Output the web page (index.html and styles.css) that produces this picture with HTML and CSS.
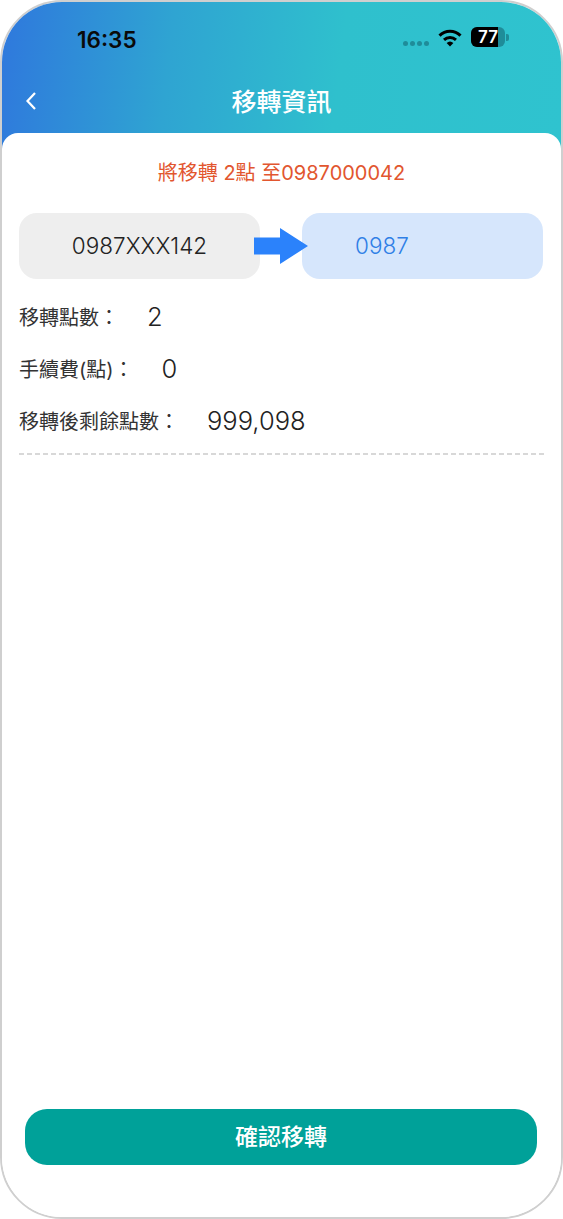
FILE: index.html
```html
<!DOCTYPE html>
<html lang="zh-Hant">
<head>
    <meta charset="UTF-8">
    <meta name="viewport" content="width=device-width, initial-scale=1.0">
    <title>移轉資訊</title>
    <link rel="stylesheet" href="styles.css">
</head>
<body>

    <div class="phone">
        <div class="header">
            <div class="statusBar">
                <span class="clock">16:35</span>
                <div class="statusIcons">
                    <span class="signalDots"><i></i><i></i><i></i><i></i></span>
                    <svg class="wifi" width="24" height="18" viewBox="0 0 24 18">
                        <path d="M1.5 6.6 A15 15 0 0 1 22.5 6.6" fill="none" stroke="#000" stroke-width="3"/>
                        <path d="M6 10.8 A9 9 0 0 1 18 10.8" fill="none" stroke="#000" stroke-width="3"/>
                        <path d="M8.6 14 L12 17.6 L15.4 14 A5 5 0 0 0 8.6 14 Z" fill="#000"/>
                    </svg>
                    <div class="battery">
                        <div class="batteryBody">
                            <div class="batteryLevel"></div>
                            <span class="batteryText">77</span>
                        </div>
                        <div class="batteryCap"></div>
                    </div>
                </div>
            </div>
            <div class="navBar">
                <svg class="backIcon" width="12" height="20" viewBox="0 0 12 20">
                    <path d="M10 2 L2.5 10 L10 18" fill="none" stroke="#fff" stroke-width="2.2"/>
                </svg>
                <h1>移轉資訊</h1>
            </div>
        </div>

        <div class="content">
            <p class="notice">將移轉 2點 至0987000042</p>

            <div class="accounts">
                <div class="account accountFrom">0987XXX142</div>
                <div class="account accountTo">0987</div>
                <svg class="arrow" width="54" height="36" viewBox="0 0 54 36">
                    <path d="M0 9.5 H26 V0 L54 18 L26 36 V26.5 H0 Z" fill="#2b82fb"/>
                </svg>
            </div>

            <div class="infoRow">
                <span class="infoLabel">移轉點數：</span>
                <span class="infoValue">2</span>
            </div>
            <div class="infoRow">
                <span class="infoLabel">手續費(點)：</span>
                <span class="infoValue">0</span>
            </div>
            <div class="infoRow">
                <span class="infoLabel">移轉後剩餘點數：</span>
                <span class="infoValue">999,098</span>
            </div>

            <div class="divider"></div>

            <button class="btnConfirm">確認移轉</button>
        </div>
    </div>

</body>
</html>
```

FILE: styles.css
```css
body {
    font-family: 'Inter', 'Noto Sans CJK TC', sans-serif;
    background-color: #fff;
    margin: 0;
}

.phone {
    box-sizing: border-box;
    width: 563px;
    height: 1219px;
    border: 2px solid #cfcfcf;
    border-radius: 62px;
    overflow: hidden;
    background-color: #fff;
    display: flex;
    flex-direction: column;
}

.header {
    height: 147px;
    margin-bottom: -16px;
    background: linear-gradient(97deg, #2f78dd 0%, #2fa4d2 30%, #2fc0cd 60%, #2fc3cf 100%);
    flex-shrink: 0;
}

.statusBar {
    height: 75px;
    padding: 0 52px 0 75px;
    display: flex;
    justify-content: space-between;
    align-items: center;
}

.clock {
    font-size: 22.5px;
    font-weight: 600;
    color: #0a0a0a;
}

.statusIcons {
    display: flex;
    align-items: center;
}

.signalDots {
    display: flex;
    gap: 2px;
    margin-right: 9px;
    margin-top: 7px;
}

.signalDots i {
    width: 5px;
    height: 5px;
    border-radius: 50%;
    background-color: #1f8c99;
}

.wifi {
    margin-right: 9px;
    margin-top: -4px;
}

.battery {
    display: flex;
    align-items: center;
    margin-top: -5px;
}

.batteryBody {
    position: relative;
    width: 34px;
    height: 20px;
    border-radius: 6px;
    overflow: hidden;
    background-color: #1f8c99;
}

.batteryLevel {
    width: 27px;
    height: 20px;
    background-color: #000;
}

.batteryText {
    position: absolute;
    top: 0;
    left: 7px;
    font-size: 17px;
    line-height: 20px;
    font-weight: 600;
    color: #fff;
}

.batteryCap {
    width: 3px;
    height: 7px;
    margin-left: 1px;
    border-radius: 0 2px 2px 0;
    background-color: #1f8c99;
}

.navBar {
    position: relative;
    height: 45px;
    display: flex;
    align-items: center;
    justify-content: center;
}

.navBar h1 {
    margin: 0;
    font-size: 25px;
    font-weight: 500;
    color: #fff;
}

.backIcon {
    position: absolute;
    left: 23px;
    top: 14px;
}

.content {
    flex-grow: 1;
    position: relative;
    background-color: #fff;
    border-radius: 16px 16px 0 0;
    padding: 0 17px;
    display: flex;
    flex-direction: column;
}

.notice {
    margin: 26px 0 0;
    height: 28px;
    line-height: 28px;
    text-align: center;
    font-size: 20px;
    color: #e2562f;
}

.accounts {
    position: relative;
    margin-top: 26px;
    margin-bottom: 11px;
    display: flex;
    gap: 42px;
}

.account {
    box-sizing: border-box;
    width: 241px;
    height: 66px;
    line-height: 66px;
    border-radius: 18px;
    font-size: 22.5px;
    font-weight: 300;
}

.accountFrom {
    background-color: #eeeeee;
    color: #222;
    text-align: center;
}

.accountTo {
    background-color: #d6e6fc;
    color: #2f7fe6;
    padding-left: 53px;
}

.arrow {
    position: absolute;
    left: 235px;
    top: 15px;
}

.infoRow {
    height: 52px;
    display: flex;
    align-items: center;
}

.infoLabel {
    font-size: 20px;
    color: #333;
}

.infoValue {
    margin-left: 28px;
    font-size: 25.5px;
    font-weight: 300;
    color: #222;
}

.divider {
    margin-top: 7px;
    width: 525px;
    height: 2px;
    background: repeating-linear-gradient(90deg, #d8d8d8 0, #d8d8d8 5px, transparent 5px, transparent 8px);
}

.btnConfirm {
    position: absolute;
    left: 23px;
    bottom: 52px;
    width: 512px;
    height: 56px;
    padding-bottom: 5px;
    border: none;
    border-radius: 22px;
    background-color: #00a199;
    color: #fff;
    font-family: inherit;
    font-size: 23px;
    font-weight: 500;
}
```
